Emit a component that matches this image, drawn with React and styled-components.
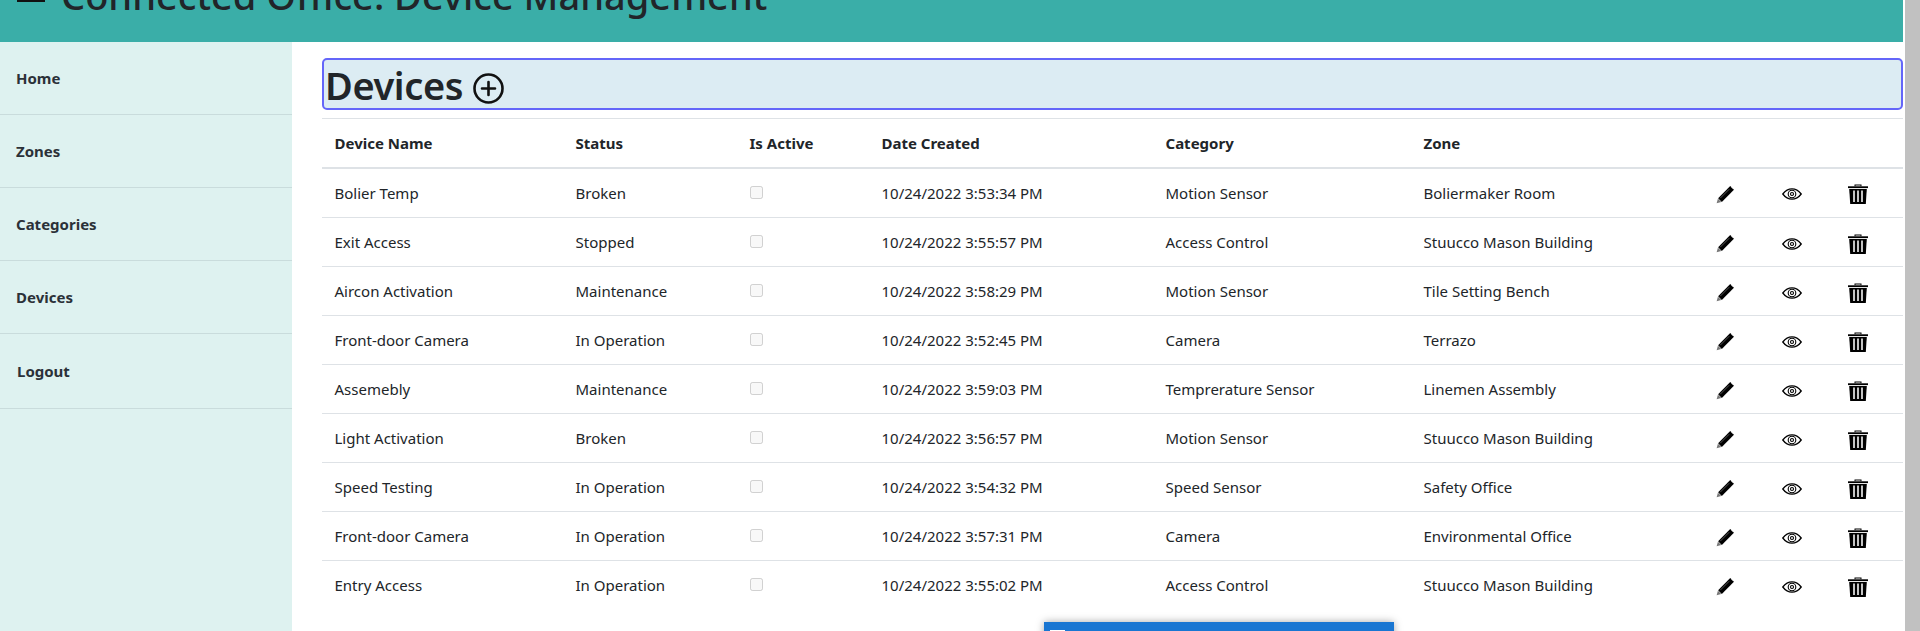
import React from "react";
import styled, { createGlobalStyle } from "styled-components";

const Global = createGlobalStyle`
  html, body { margin: 0; padding: 0; height: 631px; overflow: hidden; background: #fff; }
  body { font-family: "Noto Sans", "Open Sans", sans-serif; color: #212529; }
  * { box-sizing: border-box; }
`;
const Shell = styled.div`display: flex; height: 631px; position: relative; overflow: hidden;`;
const Page = styled.div`width: 1903px; flex: none; display: flex; flex-direction: column;`;
const ScrollBar = styled.div`width: 15px; margin-left: 2px; flex: none; background: #c1c1c1;`;
const Header = styled.header`
  height: 42px; flex: none; background: #3aaea8; display: flex; align-items: flex-end; gap: 16px;
  padding: 0 0 0 17px;
`;
const MenuWrap = styled.span`display: block; margin-bottom: 40px; line-height: 0;`;
const Title = styled.h1`margin: 0 0 22px; font-size: 38px; line-height: 50px; font-weight: 500; color: #212529; white-space: nowrap;`;
const Body = styled.div`flex: 1; display: flex; min-height: 0;`;
const Side = styled.nav`width: 292px; flex: none; background: #def2f0;`;
const SideItem = styled.a`
  display: flex; align-items: center; height: ${p => p.$h || 73}px; padding-left: ${p => p.$pad || 16}px;
  border-bottom: 1px solid #c9dcdc; font-size: 15px; font-weight: 700; color: #2b3138;
`;
const Main = styled.main`flex: 1; min-width: 0; padding: 16px 0 0 30px;`;
const Panel = styled.div`
  height: 52px; background: #dcecf3; border: 2px solid #6466f9; border-radius: 5px;
  display: flex; align-items: flex-start; gap: 10px; padding-left: 1px;
`;
const Heading = styled.h2`margin: 1px 0 0; font-size: 38px; line-height: 48px; font-weight: 600; letter-spacing: -0.4px; color: #212529;`;
const PlusWrap = styled.span`display: block; margin-top: 13px; line-height: 0;`;
const Table = styled.table`
  width: 100%; margin-top: 8px; border-collapse: collapse; table-layout: fixed; font-size: 15px; border-top: 1px solid #dee2e6;
  tbody tr:first-child td { height: 50px; }
  tbody tr:last-child td { border-bottom: none; }
`;
const Th = styled.th`
  height: 49px; padding: 0 12px 0 12.5px; text-align: left; font-weight: 700; border-bottom: 2px solid #dee2e6;
`;
const Td = styled.td`height: 49px; padding: 0 12px 0 12.5px; border-bottom: 1px solid #dee2e6; color: #212529;`;
const IconCell = styled(Td)`padding: 3px 0 0 ${p => p.$pad}px; line-height: 0;`;
const Check = styled.input`margin: 0 0 4px; width: 13px; height: 13px; vertical-align: middle;`;
const Banner = styled.div`
  position: absolute; left: 1044px; top: 622px; width: 350px; height: 40px; background: #1976d2;
  box-shadow: 0 0 8px rgba(0,0,0,.35); padding: 8px 6px;
`;
const BannerBox = styled.div`width: 15px; height: 15px; background: #fff;`;

const Menu = () => (
  <svg width="28" height="28" viewBox="0 0 28 28" fill="#111"><rect y="2" width="28" height="4"/><rect y="12" width="28" height="4"/><rect y="24" width="28" height="4"/></svg>
);
const Plus = () => (
  <svg width="31" height="31" viewBox="0 0 31 31" fill="none" stroke="#111" strokeWidth="2.600" strokeLinecap="round"><circle cx="15.5" cy="15.5" r="14"/><path d="M15.5 9v13M9 15.5h13"/></svg>
);
const Pencil = () => (
  <svg width="19" height="19" viewBox="0 0 18 18"><path d="M13.500 1 17 4.500 5.500 16 2 12.500Z" fill="#000"/><path d="M1.800 13 5 16.200 .6 17.400Z" fill="#777"/><path d="M14.400 2 16 3.600" stroke="#bbb" strokeWidth=".8"/><path d="M4 12.500 12.500 4" stroke="#888" strokeWidth=".6"/></svg>
);
const Eye = () => (
  <svg width="20" height="12" viewBox="0 0 20 12" fill="none" stroke="#000"><path d="M.8 6C3.500 2.400 6.500.8 10 .8s6.500 1.600 9.200 5.200C16.500 9.600 13.500 11.200 10 11.200S3.500 9.600.8 6Z" strokeWidth="1.300"/><circle cx="10" cy="6" r="3.800" strokeWidth="1.100"/><circle cx="10" cy="6" r="1.500" strokeWidth="1.100"/></svg>
);
const Trash = () => (
  <svg width="20" height="20" viewBox="0 0 20 20"><path d="M6.500 2.300V.6h7v1.700h-1V1.500h-5v.8Z" fill="#000"/><rect x="0" y="2.300" width="20" height="1.800" fill="#000"/><path d="M1.200 5h17.600l-1 15H2.200Z" fill="#000"/><path d="M5 6.500h2v11.500H5ZM9 6.500h2v11.500H9ZM13 6.500h2v11.500h-2Z" fill="#c4c4c4"/></svg>
);

const rows = [
  ["Bolier Temp","Broken","10/24/2022 3:53:34 PM","Motion Sensor","Boliermaker Room"],
  ["Exit Access","Stopped","10/24/2022 3:55:57 PM","Access Control","Stuucco Mason Building"],
  ["Aircon Activation","Maintenance","10/24/2022 3:58:29 PM","Motion Sensor","Tile Setting Bench"],
  ["Front-door Camera","In Operation","10/24/2022 3:52:45 PM","Camera","Terrazo"],
  ["Assemebly","Maintenance","10/24/2022 3:59:03 PM","Temprerature Sensor","Linemen Assembly"],
  ["Light Activation","Broken","10/24/2022 3:56:57 PM","Motion Sensor","Stuucco Mason Building"],
  ["Speed Testing","In Operation","10/24/2022 3:54:32 PM","Speed Sensor","Safety Office"],
  ["Front-door Camera","In Operation","10/24/2022 3:57:31 PM","Camera","Environmental Office"],
  ["Entry Access","In Operation","10/24/2022 3:55:02 PM","Access Control","Stuucco Mason Building"],
];
const widths = [241, 174, 132, 284, 258, 302, 66, 67, 57];

export default function App() {
  return (
    <Shell>
      <Global />
      <Page>
        <Header><MenuWrap><Menu /></MenuWrap><Title>Connected Office: Device Management</Title></Header>
        <Body>
          <Side>
            <SideItem>Home</SideItem>
            <SideItem>Zones</SideItem>
            <SideItem>Categories</SideItem>
            <SideItem>Devices</SideItem>
            <SideItem $h={75} $pad={17}>Logout</SideItem>
          </Side>
          <Main>
            <Panel><Heading>Devices</Heading><PlusWrap><Plus /></PlusWrap></Panel>
            <Table>
              <colgroup>{widths.map((w, i) => <col key={i} width={w} />)}</colgroup>
              <thead><tr>
                <Th>Device Name</Th><Th>Status</Th><Th>Is Active</Th><Th>Date Created</Th><Th>Category</Th><Th>Zone</Th><Th /><Th /><Th />
              </tr></thead>
              <tbody>
                {rows.map((r, i) => (
                  <tr key={i}>
                    <Td>{r[0]}</Td><Td>{r[1]}</Td>
                    <Td><Check type="checkbox" disabled /></Td>
                    <Td>{r[2]}</Td><Td>{r[3]}</Td><Td>{r[4]}</Td>
                    <IconCell $pad={3}><Pencil /></IconCell>
                    <IconCell $pad={3}><Eye /></IconCell>
                    <IconCell $pad={2}><Trash /></IconCell>
                  </tr>
                ))}
              </tbody>
            </Table>
          </Main>
        </Body>
      </Page>
      <ScrollBar />
      <Banner><BannerBox /></Banner>
    </Shell>
  );
}
